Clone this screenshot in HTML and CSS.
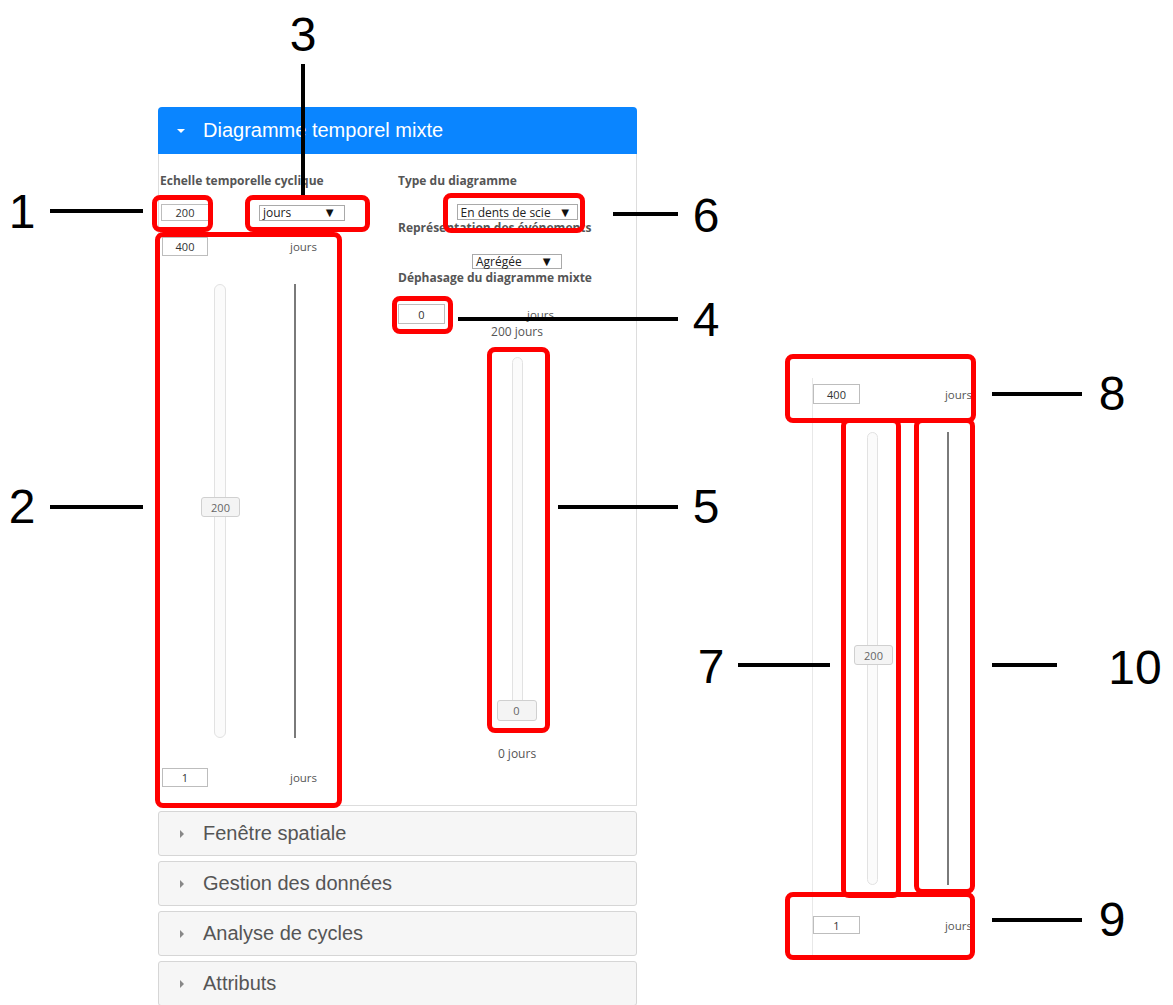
FILE: index.html
```html
<!DOCTYPE html>
<html lang="fr">
  <head>
    <meta charset="UTF-8" />
    <meta name="viewport" content="width=device-width, initial-scale=1.0" />
    <title>Diagramme temporel mixte</title>
    <link rel="stylesheet" href="styles.css">
  </head>
  <body>
    <div class="figure">
      <div class="panel">
        <div class="panel-head">
          <span class="caret-down"></span>
          <span class="panel-title">Diagramme temporel mixte</span>
        </div>
        <div class="panel-body">
          <div class="col col-left">
            <div class="label">Echelle temporelle cyclique</div>
            <div class="row row-scale">
              <div class="field field-200">200</div>
              <div class="select select-unit"><span>jours</span><span class="arrow">▼</span></div>
            </div>
            <div class="row row-max">
              <div class="field field-range">400</div>
              <span class="unit">jours</span>
            </div>
            <div class="slider-area">
              <div class="track track-left">
                <div class="handle handle-200">200</div>
              </div>
              <div class="axis"></div>
            </div>
            <div class="row row-min">
              <div class="field field-range">1</div>
              <span class="unit">jours</span>
            </div>
          </div>
          <div class="col col-right">
            <div class="label">Type du diagramme</div>
            <div class="select select-type"><span>En dents de scie</span><span class="arrow">▼</span></div>
            <div class="label label-tight">Représentation des événements</div>
            <div class="select select-agg"><span>Agrégée</span><span class="arrow">▼</span></div>
            <div class="label label-tight2">Déphasage du diagramme mixte</div>
            <div class="row row-shift">
              <div class="field field-0">0</div>
              <span class="unit unit-shift">jours</span>
            </div>
            <div class="caption caption-top">200 jours</div>
            <div class="track track-right">
              <div class="handle handle-0">0</div>
            </div>
            <div class="caption caption-bottom">0 jours</div>
          </div>
        </div>
        <div class="acc-list">
          <div class="acc-item"><span class="caret-right"></span>Fenêtre spatiale</div>
          <div class="acc-item"><span class="caret-right"></span>Gestion des données</div>
          <div class="acc-item"><span class="caret-right"></span>Analyse de cycles</div>
          <div class="acc-item"><span class="caret-right"></span>Attributs</div>
        </div>
      </div>

      <!-- enlarged detail of the cyclic scale slider -->
      <div class="detail">
        <div class="row detail-top">
          <div class="field field-range">400</div>
          <span class="unit">jours</span>
        </div>
        <div class="slider-area detail-slider">
          <div class="track track-detail">
            <div class="handle handle-200">200</div>
          </div>
          <div class="axis axis-detail"></div>
        </div>
        <div class="row detail-bottom">
          <div class="field field-range field-low">1</div>
          <span class="unit">jours</span>
        </div>
      </div>

      <!-- annotation boxes -->
      <div class="box" style="left:152px;top:195px;width:61px;height:37px"></div>
      <div class="box" style="left:245px;top:195px;width:125px;height:37px"></div>
      <div class="box" style="left:155px;top:232px;width:187px;height:576px"></div>
      <div class="box" style="left:443px;top:193px;width:142px;height:40px"></div>
      <div class="box" style="left:392px;top:296px;width:61px;height:38px"></div>
      <div class="box" style="left:487px;top:347px;width:63px;height:386px"></div>
      <div class="box" style="left:785px;top:354px;width:191px;height:69px"></div>
      <div class="box" style="left:841px;top:418px;width:60px;height:480px"></div>
      <div class="box" style="left:914px;top:418px;width:61px;height:476px"></div>
      <div class="box" style="left:785px;top:892px;width:190px;height:68px"></div>

      <!-- annotation leader lines -->
      <div class="lead" style="left:50px;top:209px;width:93px"></div>
      <div class="lead" style="left:50px;top:505px;width:93px"></div>
      <div class="lead lead-v" style="left:301px;top:64px;height:131px"></div>
      <div class="lead" style="left:458px;top:317px;width:220px"></div>
      <div class="lead" style="left:558px;top:505px;width:120px"></div>
      <div class="lead" style="left:613px;top:212px;width:65px"></div>
      <div class="lead" style="left:738px;top:663px;width:92px"></div>
      <div class="lead" style="left:992px;top:392px;width:90px"></div>
      <div class="lead" style="left:992px;top:918px;width:90px"></div>
      <div class="lead" style="left:992px;top:663px;width:65px"></div>

      <!-- annotation numbers -->
      <span class="num" style="left:22px;top:212px">1</span>
      <span class="num" style="left:22px;top:507px">2</span>
      <span class="num" style="left:303px;top:35px">3</span>
      <span class="num" style="left:706px;top:320px">4</span>
      <span class="num" style="left:706px;top:507px">5</span>
      <span class="num" style="left:706px;top:216px">6</span>
      <span class="num" style="left:711px;top:667px">7</span>
      <span class="num" style="left:1112px;top:394px">8</span>
      <span class="num" style="left:1112px;top:920px">9</span>
      <span class="num" style="left:1135px;top:668px">10</span>
    </div>
  </body>
</html>
```

FILE: styles.css
```css
* {
  box-sizing: border-box;
}
body {
  margin: 0;
  background: #ffffff;
  font-family: "Open Sans", "Liberation Sans", sans-serif;
}
.figure {
  position: relative;
  width: 1173px;
  height: 1005px;
  overflow: hidden;
  padding-top: 107px;
}
.panel {
  margin-left: 158px;
  width: 479px;
}
.panel-head {
  height: 47px;
  background: #0a85ff;
  color: #ffffff;
  border-radius: 4px 4px 0 0;
  display: flex;
  align-items: center;
  padding-left: 19px;
  font-family: "Liberation Sans", Arial, sans-serif;
  font-size: 20px;
}
.caret-down {
  width: 0;
  height: 0;
  border-left: 4px solid transparent;
  border-right: 4px solid transparent;
  border-top: 4px solid #ffffff;
  margin-right: 18px;
}
.panel-body {
  height: 652px;
  border: 1px solid #dddddd;
  border-top: none;
  display: flex;
  padding-left: 1px;
}
.col {
  width: 238px;
  display: flex;
  flex-direction: column;
}
.col-right {
  align-items: center;
}
.label {
  margin-top: 20px;
  font-size: 12px;
  line-height: 14px;
  font-weight: 700;
  color: #555555;
  align-self: flex-start;
  white-space: nowrap;
}
.label-tight {
  margin-top: 1px;
}
.label-tight2 {
  margin-top: 2px;
}
.row {
  display: flex;
  align-items: center;
}
.field {
  border: 1px solid #bdbdbd;
  background: #ffffff;
  color: #333333;
  font-size: 11px;
  text-align: center;
  display: flex;
  align-items: center;
  justify-content: center;
}
.field-200 {
  width: 48px;
  height: 17px;
  margin-left: 1px;
}
.field-range {
  width: 46px;
  height: 19px;
  margin-left: 2px;
}
.field-0 {
  width: 47px;
  height: 20px;
}
.unit {
  font-size: 11.5px;
  color: #555555;
}
.row-scale {
  margin-top: 16px;
}
.row-max {
  margin-top: 16px;
}
.row-max .unit,
.row-min .unit {
  margin-left: 82px;
}
.row-min {
  margin-top: 30px;
}
.select {
  border: 1px solid #a9a9a9;
  background: #ffffff;
  color: #222222;
  font-size: 12px;
  display: flex;
  align-items: center;
  justify-content: space-between;
  padding: 0 8px 0 3px;
}
.select .arrow {
  font-size: 13px;
  line-height: 1;
  color: #111111;
}
.select-unit {
  width: 86px;
  height: 16px;
  margin-left: 50px;
}
.select-type {
  width: 121px;
  height: 16px;
  margin-top: 16px;
  padding-right: 5px;
}
.select-agg {
  width: 90px;
  height: 15px;
  margin-top: 19px;
}
.slider-area {
  margin-top: 28px;
  height: 454px;
  display: flex;
  padding-left: 54px;
}
.track {
  position: relative;
  width: 12px;
  border: 1px solid #e2e2e2;
  border-radius: 6px;
  background: #fbfbfb;
}
.axis {
  width: 2px;
  margin-left: 68px;
  background: #7a7a7a;
}
.handle {
  position: absolute;
  height: 20px;
  border: 1px solid #d0d0d0;
  border-radius: 3px;
  background: #f4f4f4;
  color: #666666;
  font-size: 11px;
  display: flex;
  align-items: center;
  justify-content: center;
}
.handle-200 {
  top: 212px;
  left: -14px;
  width: 39px;
}
.row-shift {
  margin-top: 19px;
  align-self: flex-start;
}
.unit-shift {
  margin-left: 82px;
}
.caption {
  font-size: 12px;
  line-height: 12px;
  color: #555555;
}
.caption-top {
  margin-top: 2px;
}
.track-right {
  margin-top: 19px;
  height: 353px;
  width: 11px;
}
.handle-0 {
  top: 342px;
  left: -16px;
  width: 40px;
  height: 21px;
}
.caption-bottom {
  margin-top: 38px;
}
.acc-list {
  margin-top: 5px;
  display: flex;
  flex-direction: column;
  gap: 5px;
}
.acc-item {
  height: 45px;
  border: 1px solid #d6d6d6;
  border-radius: 3px;
  background: #f6f6f6;
  color: #555555;
  font-family: "Liberation Sans", Arial, sans-serif;
  font-size: 20px;
  display: flex;
  align-items: center;
  padding-left: 21px;
}
.caret-right {
  width: 0;
  height: 0;
  border-top: 4px solid transparent;
  border-bottom: 4px solid transparent;
  border-left: 4px solid #888888;
  margin-right: 19px;
}
.detail {
  position: absolute;
  left: 812px;
  top: 378px;
  width: 160px;
  height: 577px;
  border-left: 1px solid #e8e8e8;
}
.detail .field-range {
  margin-left: 0;
  width: 47px;
  height: 20px;
}
.detail-top {
  margin-top: 6px;
  justify-content: space-between;
}
.detail-slider {
  height: 453px;
  margin-top: 28px;
}
.track-detail {
  width: 11px;
}
.axis-detail {
  margin-left: 69px;
}
.detail-bottom {
  margin-top: 31px;
  justify-content: space-between;
}
.detail .field-low {
  height: 18px;
}
.box {
  position: absolute;
  border: 5px solid #ff0000;
  border-radius: 8px;
}
.lead {
  position: absolute;
  height: 4px;
  background: #000000;
}
.lead-v {
  width: 4px;
}
.num {
  position: absolute;
  transform: translate(-50%, -50%);
  font-family: "Liberation Sans", Arial, sans-serif;
  font-size: 48px;
  line-height: 1;
  color: #000000;
}
```
